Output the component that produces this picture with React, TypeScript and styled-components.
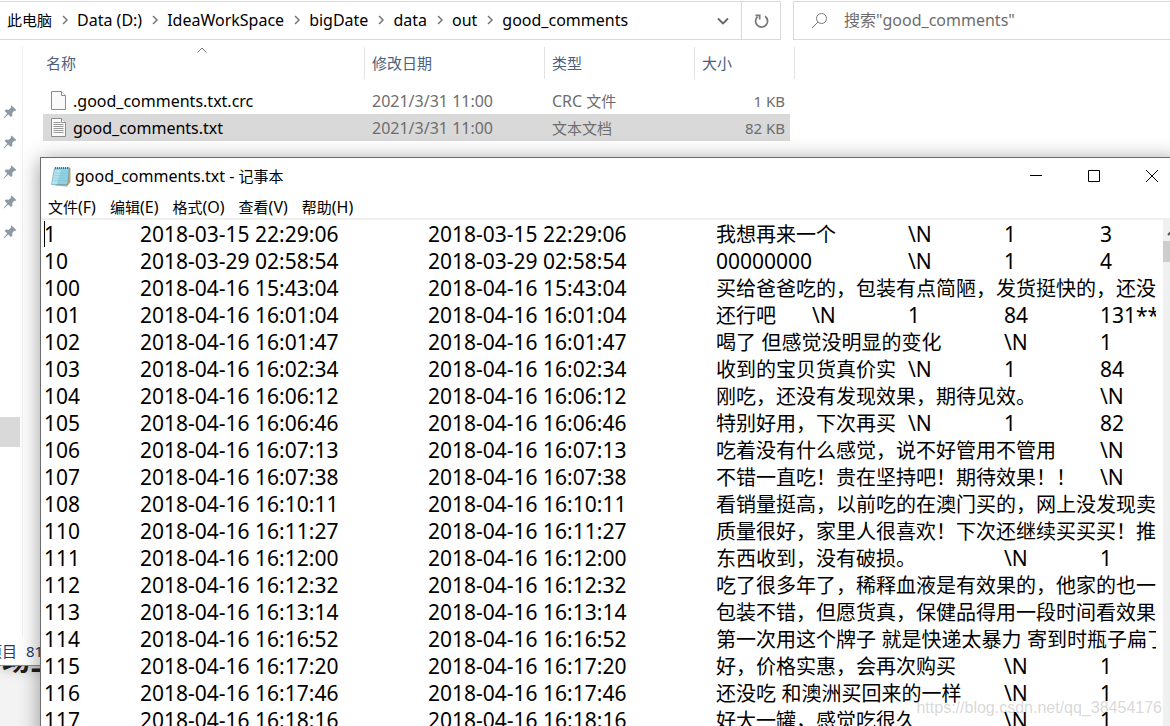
import React from "react";
import styled, { createGlobalStyle } from "styled-components";

const Global = createGlobalStyle`
  *, *::before, *::after { box-sizing: border-box; }
  html, body, #root { height: 100%; }
  body {
    margin: 0;
    overflow: hidden;
    background: #f3f3f3;
    font-family: "Noto Sans", "Noto Sans CJK SC", sans-serif;
    font-size: 15px;
    line-height: 20px;
    color: #000;
  }
  button, input { font: inherit; color: inherit; border: 0; padding: 0; margin: 0; background: none; }
`;

/* Latin runs are set one step larger than the Chinese text beside them. */
const LatinRun = styled.span<{ $size: number }>`
  font-size: ${(p) => p.$size}px;
  line-height: 1;
`;

const Desktop = styled.div`
  position: relative;
  height: 100%;
  overflow: hidden;
`;

const Backdrop = styled.p`
  margin: -20px 0 0;
  padding-left: 2px;
  font-size: 28px;
  line-height: 28px;
  font-weight: 700;
  color: #222;
  white-space: nowrap;
`;

const Explorer = styled.section`
  position: relative;
  display: flex;
  flex-direction: column;
  height: 666px;
  background: #fff;
  border-bottom: 1px solid #8a8a8a;
  box-shadow: 0 2px 12px rgba(0, 0, 0, 0.25);
`;

const TopBar = styled.header`
  display: flex;
  gap: 12px;
  height: 40px;
  padding-top: 1px;
`;

const AddressBar = styled.nav`
  display: flex;
  flex: 0 0 781px;
  padding-left: 7px;
  border: 1px solid #d9d9d9;
  border-left: 0;
`;

const Crumbs = styled.div`
  display: flex;
  flex: 1;
  align-items: center;
  padding-bottom: 1px;
`;

const Crumb = styled.a`
  color: #000;
  text-decoration: none;
  white-space: nowrap;
`;

const CrumbArrow = styled.svg`
  flex: none;
  width: 25px;
  height: 16px;
`;

const IconButton = styled.button<{ $width: number; $divided?: boolean }>`
  display: grid;
  place-items: center;
  width: ${(p) => p.$width}px;
  height: 100%;
  border-left: ${(p) => (p.$divided ? "1px solid #d9d9d9" : "0")};
`;

const SearchBox = styled.label`
  display: flex;
  align-items: center;
  gap: 16px;
  flex: 1;
  padding: 0 0 1px 17px;
  border: 1px solid #d9d9d9;
  border-right: 0;
`;

const SearchInput = styled.input`
  flex: 1;
  min-width: 0;
  font-size: 16px;
  outline: 0;
  &::placeholder { color: #6d6d6d; opacity: 1; }
`;

const ExplorerBody = styled.div`
  display: flex;
  flex: 1;
  padding-top: 7px;
`;

const Sidebar = styled.aside`
  width: 23px;
  padding-top: 50px;
  border-right: 1px solid #f0f0f0;
`;

const PinList = styled.ul`
  display: grid;
  grid-auto-rows: 30px;
  margin: 0 0 170px;
  padding: 0;
  list-style: none;
`;

const PinItem = styled.li`
  display: flex;
  align-items: center;
  padding-left: 3px;
`;

const SelectedNode = styled.div`
  width: 20px;
  height: 30px;
  background: #d9d9d9;
`;

const FileTable = styled.table`
  align-self: flex-start;
  width: 772px;
  table-layout: fixed;
  border-collapse: separate;
  border-spacing: 0;
  text-align: left;
`;

const HeadCell = styled.th<{ $width: number; $first?: boolean }>`
  position: relative;
  width: ${(p) => p.$width}px;
  height: 32px;
  padding: 0 0 0 ${(p) => (p.$first ? 23 : 7)}px;
  border-right: 1px solid #e2e2e2;
  font-weight: 400;
  color: #4c607a;
`;

const SortMark = styled.svg`
  position: absolute;
  left: 174px;
  top: 0;
`;

const HeadGap = styled.td`
  height: 8px;
  padding: 0;
`;

const FileRow = styled.tr<{ $selected?: boolean }>`
  --row: ${(p) => (p.$selected ? "#d9d9d9" : "transparent")};
`;

const Cell = styled.td`
  height: 27px;
  padding: 0 10px 0 7px;
  background: var(--row);
  color: #6d6d6d;
  white-space: nowrap;
`;

const SizeCell = styled(Cell)`
  background: linear-gradient(90deg, var(--row) 95px, transparent 95px);
  text-align: right;
`;

const NameCell = styled(Cell)`
  padding: 0 0 0 20px;
  background: linear-gradient(90deg, transparent 20px, var(--row) 20px);
`;

const FileName = styled.span`
  display: flex;
  align-items: center;
  gap: 7px;
  padding-left: 8px;
  color: #000;
`;

const StatusBar = styled.footer`
  display: flex;
  gap: 9px;
  height: 29px;
  padding-top: 5px;
  margin-left: -13px;
  color: #1e3c69;
`;

const Notepad = styled.section`
  position: absolute;
  top: 157px;
  left: 40px;
  right: -12px;
  bottom: -40px;
  display: flex;
  flex-direction: column;
  background: #fff;
  border: 1px solid #6b6b6b;
  box-shadow: 0 3px 20px rgba(0, 0, 0, 0.4);
`;

const TitleBar = styled.header`
  display: flex;
  align-items: center;
  height: 36px;
  padding-left: 9px;
`;

const Title = styled.h1`
  flex: 1;
  margin: 0 0 0 3px;
  font-size: 15px;
  font-weight: 400;
`;

const MenuBar = styled.nav`
  display: flex;
  gap: 14px;
  height: 24px;
  padding-left: 7px;
`;

const MenuButton = styled.button`
  height: 24px;
  padding-top: 2px;
  white-space: nowrap;
`;

const EditorFrame = styled.div`
  display: flex;
  flex: 1;
  min-height: 0;
  border-top: 2px solid #f0f0f0;
`;

const Editor = styled.div`
  flex: 1;
  min-width: 0;
  margin: 0 7px 0 3px;
  padding-top: 1px;
  overflow: hidden;
  outline: 0;
  white-space: pre;
  tab-size: 96px;
  font-size: 20px;
  line-height: 27px;
  text-spacing-trim: space-all;
`;

const Line = styled.div`
  height: 27px;
`;

const ScrollTrack = styled.div`
  width: 18px;
  background: #f0f0f0;
`;

const ScrollArrow = styled.svg`
  display: block;
  width: 18px;
  height: 21px;
`;

const ScrollThumb = styled.div`
  height: 21px;
  background: #cdcdcd;
`;

const Caret = styled.i`
  position: absolute;
  left: 3px;
  top: 63px;
  width: 1px;
  height: 26px;
  background: #000;
`;

const Watermark = styled.span`
  position: absolute;
  right: 8px;
  bottom: 8px;
  font-family: "Liberation Sans", Arial, sans-serif;
  font-size: 16px;
  color: rgba(120, 120, 120, 0.3);
`;

const crumbs = ["此电脑", "Data (D:)", "IdeaWorkSpace", "bigDate", "data", "out", "good_comments"];

const files = [
  { name: ".good_comments.txt.crc", date: "2021/3/31 11:00", type: "CRC 文件", size: "1 KB", text: false },
  { name: "good_comments.txt", date: "2021/3/31 11:00", type: "文本文档", size: "82 KB", text: true },
];

const comments: [string, string, string][] = [
  ["1", "2018-03-15 22:29:06", "我想再来一个\t\\N\t1\t3"],
  ["10", "2018-03-29 02:58:54", "00000000\t\\N\t1\t4"],
  ["100", "2018-04-16 15:43:04", "买给爸爸吃的，包装有点简陋，发货挺快的，还没"],
  ["101", "2018-04-16 16:01:04", "还行吧\t\\N\t1\t84\t131***"],
  ["102", "2018-04-16 16:01:47", "喝了 但感觉没明显的变化\t\\N\t1"],
  ["103", "2018-04-16 16:02:34", "收到的宝贝货真价实\t\\N\t1\t84"],
  ["104", "2018-04-16 16:06:12", "刚吃，还没有发现效果，期待见效。\t\\N"],
  ["105", "2018-04-16 16:06:46", "特别好用，下次再买\t\\N\t1\t82"],
  ["106", "2018-04-16 16:07:13", "吃着没有什么感觉，说不好管用不管用\t\\N"],
  ["107", "2018-04-16 16:07:38", "不错一直吃！贵在坚持吧！期待效果！！\t\\N"],
  ["108", "2018-04-16 16:10:11", "看销量挺高，以前吃的在澳门买的，网上没发现卖"],
  ["110", "2018-04-16 16:11:27", "质量很好，家里人很喜欢！下次还继续买买买！推"],
  ["111", "2018-04-16 16:12:00", "东西收到，没有破损。\t\\N\t1"],
  ["112", "2018-04-16 16:12:32", "吃了很多年了，稀释血液是有效果的，他家的也一"],
  ["113", "2018-04-16 16:13:14", "包装不错，但愿货真，保健品得用一段时间看效果"],
  ["114", "2018-04-16 16:16:52", "第一次用这个牌子 就是快递太暴力 寄到时瓶子扁了"],
  ["115", "2018-04-16 16:17:20", "好，价格实惠，会再次购买\t\\N\t1"],
  ["116", "2018-04-16 16:17:46", "还没吃 和澳洲买回来的一样\t\\N\t1"],
  ["117", "2018-04-16 16:18:16", "好大一罐，感觉吃很久\t\\N\t1"],
];

const Mixed = ({ text, size = 16 }: { text: string; size?: number }) => (
  <>
    {text.split(/([\x20-\x7e\t]+)/).filter(Boolean).map((run, i) =>
      /^[\x20-\x7e\t]/.test(run) ? <LatinRun key={i} $size={size}>{run}</LatinRun> : run
    )}
  </>
);

const FileIcon = ({ lined }: { lined: boolean }) => (
  <svg width="15" height="19" viewBox="0 0 15 19" aria-hidden="true">
    <path d="M.5.5h10l4 4v14H.5z" fill="#fafafa" stroke="#8c8c8c" />
    <path d="M10.5.5v4h4" fill="#fff" stroke="#8c8c8c" />
    {lined && <path d="M2.5 4.500h7M2.500 6.500h10M2.500 8.500h10M2.500 10.500h10M2.500 12.500h10M2.500 14.500h10" stroke="#999" />}
  </svg>
);

const PinIcon = () => (
  <svg width="14" height="14" viewBox="0 0 14 14" aria-hidden="true">
    <path d="M8.600.4 13.300 5l-1.100 1-1-.2-2 2.300.2 2.700-1.500 1.300L5.200 9.500 1 13.400l-.5-.5L4.300 8.600 1.600 6l1.200-1.400 2.900.1L8 2.700l-.3-1.200z" fill="#8d9aa5" />
  </svg>
);

const NotepadIcon = () => (
  <svg width="22" height="21" viewBox="0 0 22 21" aria-hidden="true">
    <path d="M5 19.500 17 20.500 20.500 16V2L18 1z" fill="#b9a476" />
    <path d="M4.500 2H19L17.500 18.500H1.500z" fill="#8fd0e2" stroke="#5f9fb5" strokeWidth=".6" />
    <path d="M5 4h6L7 18H2z" fill="#c5ebf2" opacity=".7" />
    <path d="M5 7h12M4.500 9.500h12M4 12h12M3.500 14.500h12" stroke="#7fc3d6" strokeWidth=".5" />
    <path d="M5.500 1v2M7.500 1v2M9.500 1v2M11.500 1v2M13.500 1v2M15.500 1v2M17.500 1v2" stroke="#5d6b70" />
  </svg>
);

export default function App() {
  return (
    <Desktop>
      <Global />
      <Explorer>
        <TopBar>
          <AddressBar aria-label="地址">
            <Crumbs>
              {crumbs.map((c, i) => (
                <React.Fragment key={c}>
                  {i > 0 && (
                    <CrumbArrow viewBox="0 0 25 16" aria-hidden="true">
                      <path d="m11 4 4 4-4 4" fill="none" stroke="#777" strokeWidth="1.500" />
                    </CrumbArrow>
                  )}
                  <Crumb href="#"><Mixed text={c} /></Crumb>
                </React.Fragment>
              ))}
            </Crumbs>
            <IconButton $width={36} aria-label="历史记录">
              <svg width="12" height="8" viewBox="0 0 12 8"><path d="m1 1.500 5 5 5-5" fill="none" stroke="#666" strokeWidth="1.800" /></svg>
            </IconButton>
            <IconButton $width={39} $divided aria-label="刷新">
              <svg width="16" height="16" viewBox="0 0 16 16">
                <path d="M12 3.200a6 6 0 1 1-7.500.5M2.500 2.300h4.200v4.200" fill="none" stroke="#777" strokeWidth="1.700" />
              </svg>
            </IconButton>
          </AddressBar>
          <SearchBox>
            <svg width="17" height="17" viewBox="0 0 17 17" aria-hidden="true">
              <circle cx="10.500" cy="6.500" r="5" fill="none" stroke="#777" />
              <path d="M7 10 1 16" stroke="#777" />
            </svg>
            <SearchInput type="text" aria-label="搜索" placeholder={'搜索"good_comments"'} />
          </SearchBox>
        </TopBar>
        <ExplorerBody>
          <Sidebar>
            <PinList>
              {[1, 2, 3, 4, 5].map((n) => <PinItem key={n}><PinIcon /></PinItem>)}
            </PinList>
            <SelectedNode />
          </Sidebar>
          <FileTable>
            <thead>
              <tr>
                <HeadCell $width={342} $first>
                  名称
                  <SortMark width="10" height="6" viewBox="0 0 10 6"><path d="m.5 5.500 4.500-4.500 4.500 4.500" fill="none" stroke="#777" /></SortMark>
                </HeadCell>
                <HeadCell $width={180}>修改日期</HeadCell>
                <HeadCell $width={150}>类型</HeadCell>
                <HeadCell $width={100}>大小</HeadCell>
              </tr>
            </thead>
            <tbody>
              <tr><HeadGap colSpan={4} /></tr>
              {files.map((f) => (
                <FileRow key={f.name} $selected={f.text}>
                  <NameCell><FileName><FileIcon lined={f.text} /><span><Mixed text={f.name} /></span></FileName></NameCell>
                  <Cell><Mixed text={f.date} /></Cell>
                  <Cell><Mixed text={f.type} /></Cell>
                  <SizeCell>{f.size}</SizeCell>
                </FileRow>
              ))}
            </tbody>
          </FileTable>
        </ExplorerBody>
        <StatusBar><span>项目</span><span>81</span></StatusBar>
      </Explorer>
      <Backdrop>场三</Backdrop>
      <Notepad>
        <TitleBar>
          <NotepadIcon />
          <Title><Mixed text="good_comments.txt - 记事本" /></Title>
          <IconButton $width={58} aria-label="最小化">
            <svg width="12" height="12" viewBox="0 0 12 12"><path d="M0 5.500h12" stroke="#000" /></svg>
          </IconButton>
          <IconButton $width={58} aria-label="最大化">
            <svg width="12" height="12" viewBox="0 0 12 12"><path d="M.5.5h11v11H.5z" fill="none" stroke="#000" /></svg>
          </IconButton>
          <IconButton $width={58} aria-label="关闭">
            <svg width="12" height="12" viewBox="0 0 12 12"><path d="m0 0 12 12M12 0 0 12" stroke="#000" /></svg>
          </IconButton>
        </TitleBar>
        <MenuBar aria-label="菜单">
          {["文件(F)", "编辑(E)", "格式(O)", "查看(V)", "帮助(H)"].map((m) => (
            <MenuButton key={m}><Mixed text={m} /></MenuButton>
          ))}
        </MenuBar>
        <EditorFrame>
          <Editor
            role="textbox"
            aria-multiline="true"
            aria-label="文本编辑器"
            contentEditable
            suppressContentEditableWarning
            spellCheck={false}
          >
            {comments.map(([id, date, rest]) => (
              <Line key={id}><Mixed size={21} text={`${id}\t${date}\t${date}\t${rest}`} /></Line>
            ))}
          </Editor>
          <ScrollTrack>
            <ScrollArrow viewBox="0 0 18 21" aria-hidden="true"><path d="m5 15 4-4 4 4" fill="none" stroke="#555" strokeWidth="2" /></ScrollArrow>
            <ScrollThumb />
          </ScrollTrack>
        </EditorFrame>
        <Caret />
      </Notepad>
      <Watermark>https://blog.csdn.net/qq_38454176</Watermark>
    </Desktop>
  );
}
